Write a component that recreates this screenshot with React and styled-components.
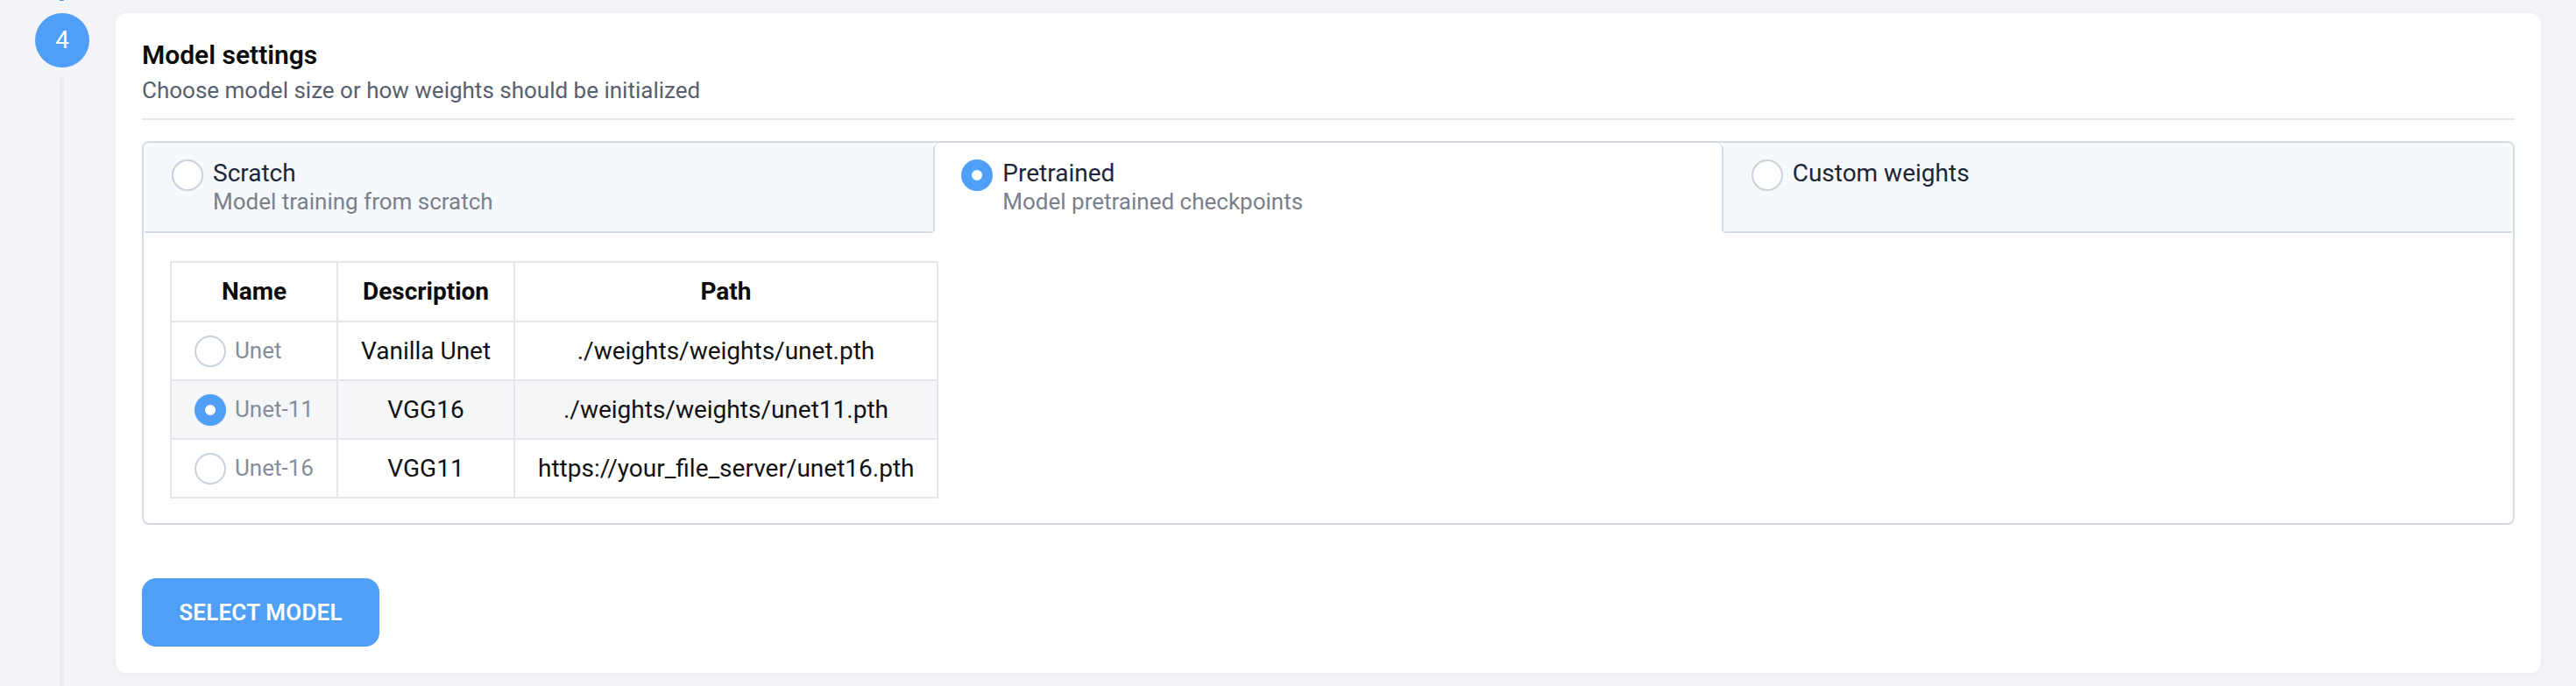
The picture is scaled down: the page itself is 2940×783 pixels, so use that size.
import React from "react";
import styled, { createGlobalStyle, css } from "styled-components";

const Global = createGlobalStyle`
  * { box-sizing: border-box; }
  html, body { margin: 0; padding: 0; }
  body {
    background: #f4f5f9;
    font-family: Roboto, "Noto Sans", "Liberation Sans", sans-serif;
    color: #111;
  }
`;

const BLUE = "#4f9ef8";
const BORDER = "#d5dbe3";
const GRID = "#e3e5ea";

const Page = styled.div`
  display: flex;
  min-height: 783px;
`;

const Rail = styled.div`
  width: 132px;
  flex: none;
  display: flex;
  flex-direction: column;
  align-items: flex-start;
  padding-left: 40px;
`;

const RailTop = styled.div`
  width: 5px;
  height: 1px;
  margin-left: 28px;
  background: ${BLUE};
`;

const StepCircle = styled.div`
  width: 62px;
  height: 62px;
  margin-top: 14px;
  border-radius: 50%;
  background: ${BLUE};
  color: #fff;
  display: flex;
  align-items: center;
  justify-content: center;
  font-size: 28px;
  line-height: 1;
`;

const RailLine = styled.div`
  flex: 1;
  width: 5px;
  margin-left: 28px;
  margin-top: 12px;
  background: #ebecef;
`;

const Main = styled.div`
  flex: 1;
  display: flex;
  padding: 15px 40px 16px 0;
`;

const Card = styled.section`
  flex: 1;
  background: #fff;
  border-radius: 12px;
  box-shadow: 0 1px 10px rgba(20, 30, 60, 0.05);
  padding: 30px 30px 30px 30px;
  display: flex;
  flex-direction: column;
  align-items: flex-start;
`;

const Title = styled.h2`
  margin: 0;
  font-size: 30px;
  line-height: 36px;
  font-weight: 600;
  color: #0b0b0b;
`;

const Subtitle = styled.p`
  margin: 4px 0 0;
  font-size: 26px;
  line-height: 36px;
  color: #58606e;
`;

const Divider = styled.hr`
  align-self: stretch;
  margin: 14px 0 0;
  border: 0;
  height: 2px;
  background: #e4e6eb;
`;

const TabBox = styled.div`
  align-self: stretch;
  margin-top: 24px;
  border: 2px solid ${BORDER};
  border-radius: 8px;
  overflow: hidden;
`;

const TabBar = styled.div`
  display: grid;
  grid-template-columns: 1fr 1fr 1fr;
`;

const Tab = styled.div`
  display: flex;
  align-items: flex-start;
  gap: 11px;
  padding: 18px 30px 19px;
  border-left: 2px solid transparent;
  border-right: 2px solid transparent;
  border-bottom: 2px solid ${BORDER};
  background: #f5f8fc;
  ${(p) =>
    p.$active &&
    css`
      background: #fff;
      border-left-color: ${BORDER};
      border-right-color: ${BORDER};
      border-bottom-color: transparent;
      border-radius: 8px 8px 0 0;
    `}
`;

const Radio = styled.span`
  flex: none;
  display: inline-block;
  width: 36px;
  height: 36px;
  border-radius: 50%;
  background: #fff;
  border: 2px solid #c8d1dc;
  margin-top: ${(p) => p.$offset || 0}px;
  ${(p) =>
    p.$checked &&
    css`
      border: 12.5px solid ${BLUE};
    `}
`;

const TabText = styled.div`
  display: flex;
  flex-direction: column;
`;

const TabLabel = styled.span`
  font-size: 28px;
  line-height: 34px;
  color: #1c2636;
`;

const TabDesc = styled.span`
  font-size: 26px;
  line-height: 30px;
  color: #7a808b;
`;

const Panel = styled.div`
  padding: 32px 30px 28px;
`;

const Table = styled.table`
  border-collapse: separate;
  border-spacing: 0;
  table-layout: fixed;
  width: 877px;
  border-top: 2px solid ${GRID};
  border-left: 2px solid ${GRID};
`;

const Th = styled.th`
  width: ${(p) => p.$w}px;
  padding: 15px 26px;
  font-size: 28px;
  line-height: 36px;
  font-weight: 700;
  color: #0b0b0b;
  text-align: center;
  border-right: 2px solid ${GRID};
  border-bottom: 2px solid ${GRID};
`;

const Tr = styled.tr`
  background: ${(p) => (p.$selected ? "#f5f6f8" : "#fff")};
`;

const Td = styled.td`
  padding: 14px 26px;
  font-size: 28px;
  line-height: 37px;
  color: #111;
  text-align: center;
  white-space: nowrap;
  border-right: 2px solid ${GRID};
  border-bottom: 2px solid ${GRID};
`;

const NameCell = styled.div`
  display: flex;
  align-items: center;
  gap: 10px;
  height: 37px;
`;

const NameText = styled.span`
  font-size: 26px;
  color: #868d9a;
`;

const Button = styled.button`
  margin-top: 61px;
  width: 271px;
  height: 78px;
  border: 0;
  border-radius: 16px;
  background: ${BLUE};
  color: #fff;
  font-family: inherit;
  font-size: 26px;
  font-weight: 600;
  letter-spacing: 0.2px;
  cursor: pointer;
`;

const tabs = [
  { label: "Scratch", desc: "Model training from scratch" },
  { label: "Pretrained", desc: "Model pretrained checkpoints", active: true },
  { label: "Custom weights" },
];

const rows = [
  { name: "Unet", desc: "Vanilla Unet", path: "./weights/weights/unet.pth" },
  { name: "Unet-11", desc: "VGG16", path: "./weights/weights/unet11.pth", selected: true },
  { name: "Unet-16", desc: "VGG11", path: "https://your_file_server/unet16.pth" },
];

export default function App() {
  return (
    <>
      <Global />
      <Page>
        <Rail>
          <RailTop />
          <StepCircle>4</StepCircle>
          <RailLine />
        </Rail>
        <Main>
          <Card>
            <Title>Model settings</Title>
            <Subtitle>Choose model size or how weights should be initialized</Subtitle>
            <Divider />
            <TabBox>
              <TabBar>
                {tabs.map((t) => (
                  <Tab key={t.label} $active={t.active}>
                    <Radio $checked={t.active} $offset={1} />
                    <TabText>
                      <TabLabel>{t.label}</TabLabel>
                      {t.desc && <TabDesc>{t.desc}</TabDesc>}
                    </TabText>
                  </Tab>
                ))}
              </TabBar>
              <Panel>
                <Table>
                  <thead>
                    <tr>
                      <Th $w={190}>Name</Th>
                      <Th $w={202}>Description</Th>
                      <Th $w={483}>Path</Th>
                    </tr>
                  </thead>
                  <tbody>
                    {rows.map((r) => (
                      <Tr key={r.name} $selected={r.selected}>
                        <Td>
                          <NameCell>
                            <Radio $checked={r.selected} />
                            <NameText>{r.name}</NameText>
                          </NameCell>
                        </Td>
                        <Td>{r.desc}</Td>
                        <Td>{r.path}</Td>
                      </Tr>
                    ))}
                  </tbody>
                </Table>
              </Panel>
            </TabBox>
            <Button>SELECT MODEL</Button>
          </Card>
        </Main>
      </Page>
    </>
  );
}
